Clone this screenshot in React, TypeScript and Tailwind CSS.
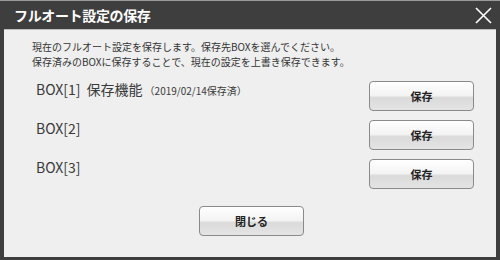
import React from 'react';

const jp = "font-['Noto_Sans_CJK_JP','Noto_Sans',sans-serif]";

const GlossButton: React.FC<{ label: string; className?: string }> = ({ label, className = '' }) => (
  <button
    type="button"
    className={`h-[30px] rounded-[4px] border border-[#8a8a8a] bg-[linear-gradient(to_bottom,#ffffff_0%,#f3f3f3_48%,#dadada_56%,#e4e4e4_100%)] text-[11px] font-bold text-[#222] shadow-[inset_0_1px_0_#fff] ${className}`}
  >
    {label}
  </button>
);

const rows = [
  { name: 'BOX[1]', label: '保存機能', note: '（2019/02/14保存済）' },
  { name: 'BOX[2]' },
  { name: 'BOX[3]' },
];

const App: React.FC = () => {
  return (
    <div className={`w-[500px] h-[260px] bg-[#3e3e3e] border-t border-t-[#9a9a9a] flex flex-col px-[4px] pb-[3px] ${jp}`}>
      {/* title bar */}
      <div className="h-[29px] flex items-center justify-between pl-[10px] pr-[3px] border-b border-b-[#bdbdbd]">
        <span className="text-white text-[14px] font-bold tracking-tight">フルオート設定の保存</span>
        <svg width="19" height="19" viewBox="0 0 19 19" className="mt-[1px]">
          <path d="M2 2 L17 17 M17 2 L2 17" stroke="#ffffff" strokeWidth="1.6" fill="none" />
        </svg>
      </div>

      {/* body */}
      <div className="flex-1 bg-[#efefef] flex flex-col pl-[28px] pr-[22px] pt-[9px]">
        <div className="text-[10px] leading-[15px] text-[#333]">
          <p>現在のフルオート設定を保存します。保存先BOXを選んでください。</p>
          <p>保存済みのBOXに保存することで、現在の設定を上書き保存できます。</p>
        </div>

        <div className="mt-[12px] flex flex-col gap-[9px]">
          {rows.map((r) => (
            <div key={r.name} className="h-[30px] flex items-start justify-between">
              <div className="pl-[4px] leading-[17px] flex items-baseline text-[#3a3a3a]">
                <span className="text-[14px]">{r.name}</span>
                {r.label && <span className="text-[14px] ml-[6px]">{r.label}</span>}
                {r.note && <span className="text-[10px] ml-[2px]">{r.note}</span>}
              </div>
              <GlossButton label="保存" className="w-[105px]" />
            </div>
          ))}
        </div>

        <div className="mt-[17px] flex justify-center pr-[3px]">
          <GlossButton label="閉じる" className="w-[105px]" />
        </div>
      </div>
    </div>
  );
};

export default App;
